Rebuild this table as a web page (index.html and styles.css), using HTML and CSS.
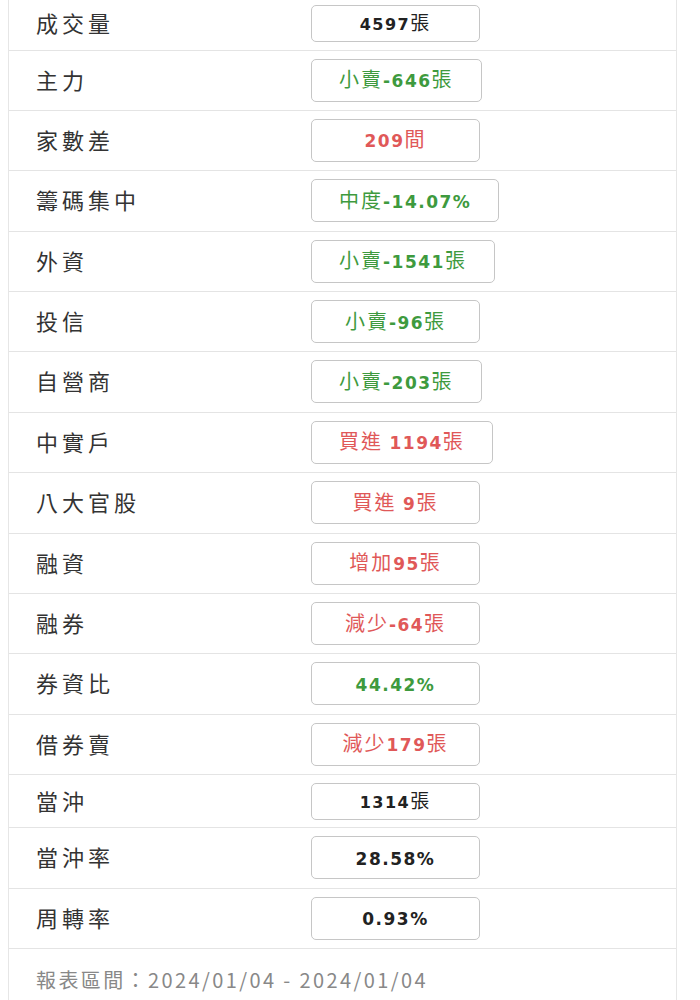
FILE: index.html
```html
<!DOCTYPE html>
<html lang="zh-Hant">
<head>
<meta charset="utf-8">
<title>籌碼資訊</title>
<link rel="stylesheet" href="styles.css">
</head>
<body>
<div class="card">
  <div class="row row-sm"><div class="label">成交量</div><div class="val val-sm"><span><b>4597</b>張</span></div></div>
  <div class="row"><div class="label">主力</div><div class="val green"><span>小賣<b>-646</b>張</span></div></div>
  <div class="row"><div class="label">家數差</div><div class="val red"><span><b>209</b>間</span></div></div>
  <div class="row"><div class="label">籌碼集中</div><div class="val green"><span>中度<b>-14.07%</b></span></div></div>
  <div class="row"><div class="label">外資</div><div class="val green"><span>小賣<b>-1541</b>張</span></div></div>
  <div class="row"><div class="label">投信</div><div class="val green"><span>小賣<b>-96</b>張</span></div></div>
  <div class="row"><div class="label">自營商</div><div class="val green"><span>小賣<b>-203</b>張</span></div></div>
  <div class="row"><div class="label">中實戶</div><div class="val red"><span>買進 <b>1194</b>張</span></div></div>
  <div class="row"><div class="label">八大官股</div><div class="val red"><span>買進 <b>9</b>張</span></div></div>
  <div class="row"><div class="label">融資</div><div class="val red"><span>增加<b>95</b>張</span></div></div>
  <div class="row"><div class="label">融券</div><div class="val red"><span>減少<b>-64</b>張</span></div></div>
  <div class="row"><div class="label">券資比</div><div class="val green"><span><b>44.42%</b></span></div></div>
  <div class="row"><div class="label">借券賣</div><div class="val red"><span>減少<b>179</b>張</span></div></div>
  <div class="row row-sm"><div class="label">當沖</div><div class="val val-sm"><span><b>1314</b>張</span></div></div>
  <div class="row"><div class="label">當沖率</div><div class="val"><span><b>28.58%</b></span></div></div>
  <div class="row"><div class="label">周轉率</div><div class="val"><span><b>0.93%</b></span></div></div>
  <div class="footer">報表區間：2024/01/04 - 2024/01/04</div>
</div>
</body>
</html>
```

FILE: styles.css
```css
html, body {
  margin: 0;
  padding: 0;
  background: #ffffff;
}
body {
  font-family: "Noto Sans CJK TC", "Noto Sans", sans-serif;
  color: #333333;
  height: 1000px;
  overflow: hidden;
}
.card {
  margin: -2.5px 0 0 8px;
  width: 669px;
  box-sizing: border-box;
  border-left: 1px solid #e6e6e6;
  border-right: 1px solid #e6e6e6;
  min-height: 1010px;
}
.row {
  display: flex;
  align-items: center;
  padding: 8px 0 8.4px 27px;
  border-bottom: 1px solid #e4e4e4;
}
.row-sm {
  padding: 7.5px 0 7.5px 27px;
}
.label {
  width: 275px;
  font-size: 22px;
  letter-spacing: 4px;
  color: #333333;
  line-height: 28px;
  padding-bottom: 3px;
}
.val {
  box-sizing: border-box;
  min-width: 169px;
  height: 43px;
  padding: 0 27px;
  border: 1px solid #c6c6c6;
  border-radius: 5px;
  display: flex;
  align-items: center;
  justify-content: center;
  font-size: 20px;
  letter-spacing: 2px;
  color: #222222;
  white-space: nowrap;
}
.val span {
  line-height: 24px;
}
.val b {
  font-family: "DejaVu Sans", "Noto Sans CJK TC", sans-serif;
  font-weight: bold;
  font-size: 17px;
  letter-spacing: 1.5px;
}
.val-sm {
  height: 37px;
  font-size: 19px;
}
.val-sm b {
  font-size: 16px;
}
.green { color: #3e9a3e; }
.red { color: #e05858; }
.footer {
  padding: 18px 0 0 27px;
  font-size: 20px;
  line-height: 26px;
  color: #888888;
  letter-spacing: 2.4px;
}
```
